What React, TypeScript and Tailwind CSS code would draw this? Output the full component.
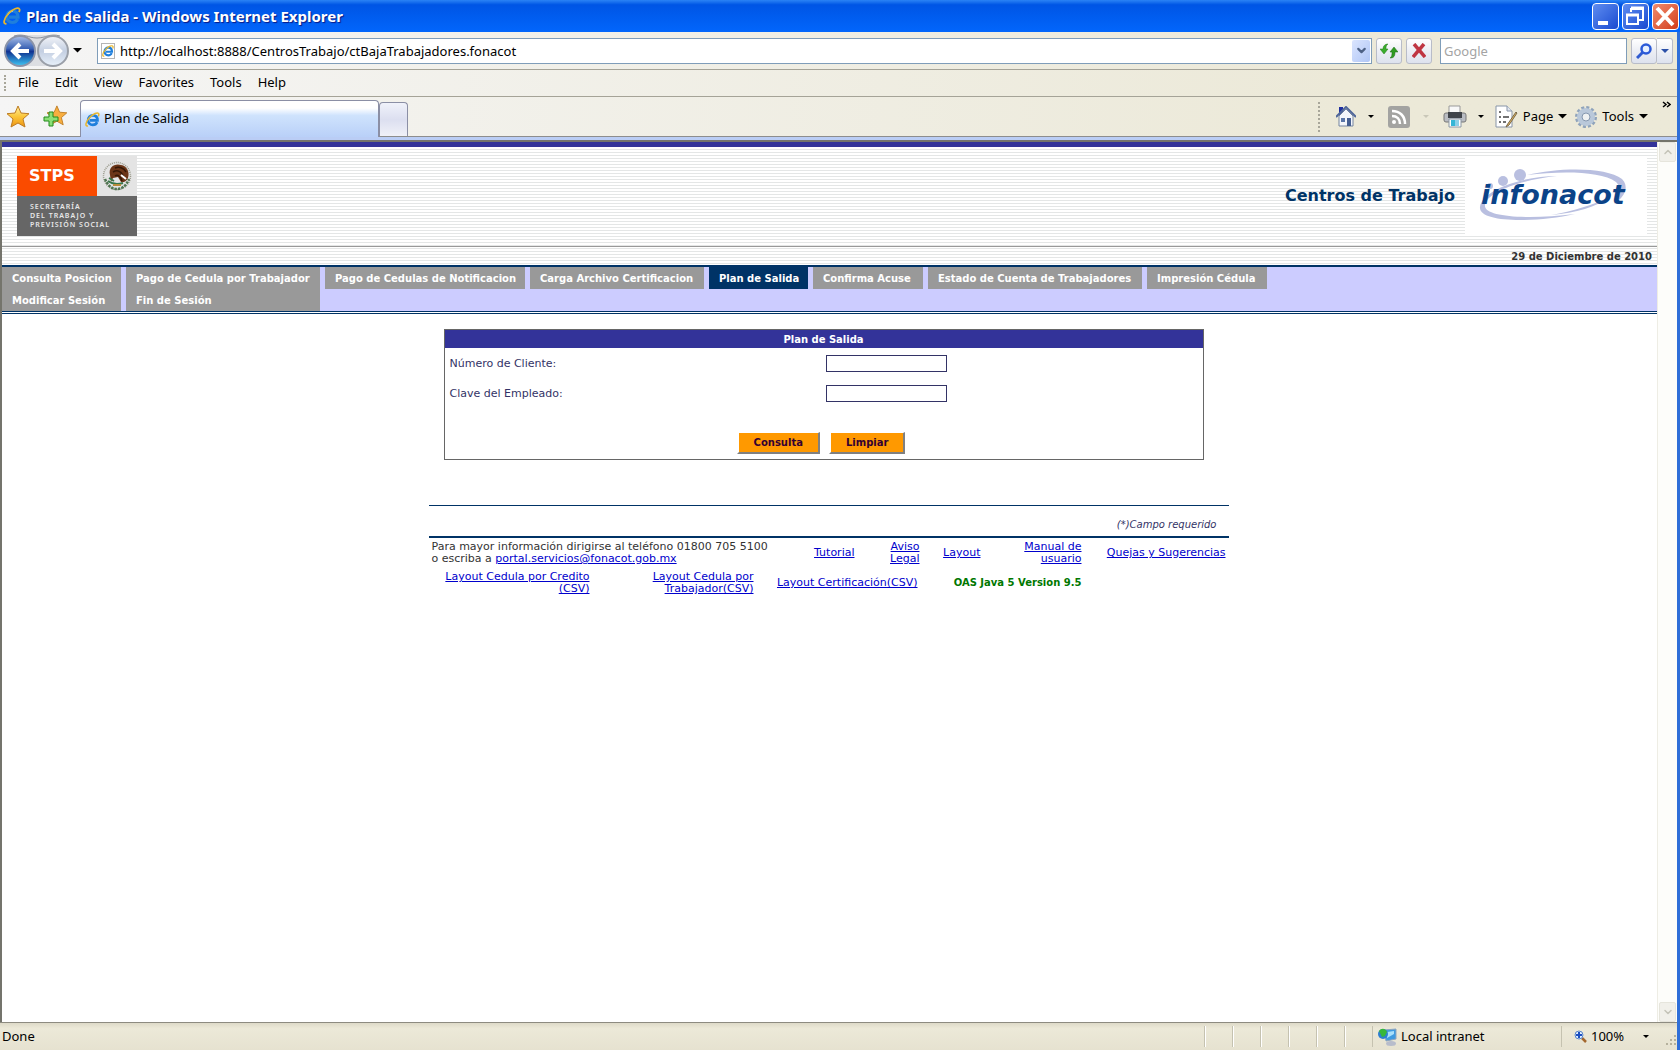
import { ChevronDown, ChevronUp } from 'lucide-react';
import type { ReactNode } from 'react';

const menuItems = ['File', 'Edit', 'View', 'Favorites', 'Tools', 'Help'];

const navColumns = [
  { width: 'w-[119px]', items: ['Consulta Posicion', 'Modificar Sesión'] },
  { width: 'w-[194px]', items: ['Pago de Cedula por Trabajador', 'Fin de Sesión'] },
  { width: 'w-[200px]', items: ['Pago de Cedulas de Notificacion'] },
  { width: 'w-[174px]', items: ['Carga Archivo Certificacion'] },
  { width: 'w-[99px]', items: ['Plan de Salida'], active: true },
  { width: 'w-[110px]', items: ['Confirma Acuse'] },
  { width: 'w-[214px]', items: ['Estado de Cuenta de Trabajadores'] },
  { width: 'w-[120px]', items: ['Impresión Cédula'] },
];

const fields = [
  { id: 'numeroCliente', label: 'Número de Cliente:' },
  { id: 'claveEmpleado', label: 'Clave del Empleado:' },
];

function IeIcon({ size }: { size: number }) {
  return (
    <svg width={size} height={size} viewBox="0 0 18 18" fill="none" className="shrink-0">
      <path
        d="M14.6 12.2c-.9 2-2.800 3.300-5.200 3.300-3.300 0-5.600-2.400-5.600-5.700 0-3.400 2.400-5.800 5.700-5.800 3.400 0 5.500 2.400 5.500 6.100H6"
        stroke="#1f7fdc"
        strokeWidth="3.200"
      />
      <path d="M5 7.500C6 5 8 4 10 4.200" stroke="#9bd6ff" strokeWidth="1.200" />
      <path d="M3.500 16.500C-.5 18 .8 11.500 5.500 6.500 9.500 2.200 15.500-.5 16.500 2.200c.3.900 0 2-.5 3" stroke="#e8b62c" strokeWidth="1.800" />
    </svg>
  );
}

function Caret({ size = 8, color = '#000' }: { size?: number; color?: string }) {
  return (
    <svg width={size} height={size / 2} viewBox="0 0 8 4" className="shrink-0">
      <path d="M0 0h8L4 4z" fill={color} />
    </svg>
  );
}

function HistoryButtons() {
  return (
    <svg width="66" height="34" viewBox="0 0 66 34">
      <defs>
        <linearGradient id="back" x1="0" y1="0" x2="0" y2="1">
          <stop offset="0" stopColor="#a9bfe8" />
          <stop offset=".42" stopColor="#3a62b4" />
          <stop offset=".52" stopColor="#0f3190" />
          <stop offset="1" stopColor="#3fc8f6" />
        </linearGradient>
        <linearGradient id="forward" x1="0" y1="0" x2="0" y2="1">
          <stop offset="0" stopColor="#f2f4f8" />
          <stop offset=".5" stopColor="#c4cfe2" />
          <stop offset="1" stopColor="#e8f1fa" />
        </linearGradient>
      </defs>
      <path d="M16 1h34v31H16z" fill="#dcdee2" />
      <path d="M10 2C20-1 24 4 33 4S46-1 56 2" stroke="#8c929c" fill="none" />
      <circle cx="16" cy="17" r="15" fill="url(#back)" stroke="#8a93a8" strokeWidth="2" />
      <circle cx="49" cy="17" r="15" fill="url(#forward)" stroke="#9a9fa8" strokeWidth="2" />
      <path d="M25 17H9M16 10l-7 7 7 7" stroke="#fff" strokeWidth="4" fill="none" />
      <path d="M40 17h16M49 10l7 7-7 7" stroke="#fff" strokeWidth="4" fill="none" />
    </svg>
  );
}

const starPath = 'M11 1l3 7 8 .7-6 5.300 2 8L11 18l-7 4 2-8L0 8.700 8 8z';

function StarIcon() {
  return (
    <svg width="22" height="23" viewBox="0 0 22 23">
      <defs>
        <linearGradient id="star" x1="0" y1="0" x2="0" y2="1">
          <stop offset="0" stopColor="#fff0a0" />
          <stop offset=".5" stopColor="#fbc63a" />
          <stop offset="1" stopColor="#ee9413" />
        </linearGradient>
      </defs>
      <path d={starPath} fill="url(#star)" stroke="#bd7c23" strokeLinejoin="round" />
    </svg>
  );
}

function AddStarIcon() {
  return (
    <svg width="24" height="23" viewBox="0 0 24 23">
      <path d={starPath} transform="translate(4 0) scale(.9)" fill="#f8ae3f" stroke="#bd7c23" strokeLinejoin="round" />
      <path d="M6 7h4v5h5v4h-5v5H6v-5H1v-4h5z" fill="#8be077" stroke="#238a1c" />
    </svg>
  );
}

function RefreshIcon() {
  return (
    <svg width="18" height="16" viewBox="0 0 18 16">
      <path d="M8 1C5 1 3 3 3 6H0l4 5 4-5H6c0-2 0-4 2-5z" fill="#3bad2c" stroke="#237d1b" strokeWidth=".5" />
      <path d="M10 15c4 0 5-2 5-6h3l-4-5-4 5h2c0 2 0 5-2 6z" fill="#2f9b22" stroke="#1c6d15" strokeWidth=".5" />
    </svg>
  );
}

function HomeIcon() {
  return (
    <svg width="20" height="21" viewBox="0 0 20 21">
      <path d="M3 1h4v8H3z" fill="#1f2fa0" />
      <path d="M3 10l7-7 7 7v10H3z" fill="#f4f6fb" stroke="#7585a0" />
      <path d="M0 11L10 1l10 10" fill="none" stroke="#50679a" strokeWidth="2" />
      <path d="M5 12h4v4H5z" fill="#5b76a8" />
      <path d="M11 12h4v8h-4z" fill="#465f92" />
    </svg>
  );
}

function FeedIcon() {
  return (
    <svg width="22" height="22" viewBox="0 0 22 22" fill="none">
      <rect width="22" height="22" rx="3" fill="#a3a3a1" />
      <circle cx="6" cy="16" r="2" fill="#fff" />
      <path d="M4 10c5 0 8 3 8 8M4 5c8 0 13 5 13 13" stroke="#fff" strokeWidth="2.500" />
    </svg>
  );
}

function PrinterIcon() {
  return (
    <svg width="24" height="23" viewBox="0 0 24 23">
      <path d="M6 1h11v9H6z" fill="#f8f8f8" stroke="#999" />
      <rect x="1" y="8" width="22" height="9" rx="2" fill="#b9bcc2" stroke="#777" />
      <path d="M5 7h14v6H5z" fill="#40444a" />
      <path d="M6 14h12v8H6z" fill="#fff" stroke="#8a97a5" />
      <path d="M8 15h4v6H8z" fill="#35b6d6" />
      <path d="M12 15h4v6h-4z" fill="#8bd0e8" />
    </svg>
  );
}

function PageIcon() {
  return (
    <svg width="23" height="23" viewBox="0 0 23 23">
      <path d="M1 1h11l5 5v16H1z" fill="#fff" stroke="#8895a8" />
      <path d="M12 1v5h5" fill="#e2e7ef" stroke="#8895a8" />
      <path d="M4 7h2M4 12h2M4 17h2M8 12h6M8 17h3" stroke="#444" strokeWidth="1.500" />
      <path d="M21 7L12 20l-1 2 3-2 8-12z" fill="#e7b65b" stroke="#76684c" />
    </svg>
  );
}

function GearIcon() {
  return (
    <svg width="22" height="22" viewBox="0 0 22 22" fill="none">
      <circle cx="11" cy="11" r="9.500" stroke="#8fa3bb" strokeWidth="3" strokeDasharray="3 1.970" />
      <circle cx="11" cy="11" r="6.500" stroke="#b9c8da" strokeWidth="5" />
      <circle cx="11" cy="11" r="4" fill="#eef1f2" stroke="#8497b0" />
    </svg>
  );
}

function IntranetIcon() {
  return (
    <svg width="19" height="18" viewBox="0 0 19 18">
      <ellipse cx="13" cy="15.500" rx="5" ry="2.500" fill="#b7bccb" />
      <path d="M6 2l12-1v10l-10 2z" fill="#3f9be0" stroke="#8fa5be" />
      <path d="M9 4l7-1v3l-7 4z" fill="#a8e0fb" />
      <circle cx="5" cy="6" r="5" fill="#2d7fd0" />
      <path d="M1 3c3-4 7-2 8 1L7 8 4 9z" fill="#37b83a" />
    </svg>
  );
}

function MagnifierIcon() {
  return (
    <svg width="16" height="16" viewBox="0 0 16 16" fill="none">
      <path d="M7 9l-6 6" stroke="#2f5bd0" strokeWidth="3" />
      <circle cx="10" cy="6" r="4.500" fill="#e6f0ff" stroke="#2b5ad8" strokeWidth="2.500" />
    </svg>
  );
}

function ZoomIcon() {
  return (
    <svg width="13" height="13" viewBox="0 0 13 13" fill="none">
      <path d="M8 8l4 4" stroke="#a4672e" strokeWidth="2.500" />
      <circle cx="5" cy="5" r="4" fill="#dcecff" stroke="#5b86c8" />
      <path d="M5 2v6M2 5h6" stroke="#1c4fc0" strokeWidth="2" />
    </svg>
  );
}

function StpsLogo() {
  return (
    <div className="w-[120px] shrink-0">
      <div className="flex h-10">
        <div className="flex w-20 items-center bg-[#fa4b00] pl-3 text-[16px] font-bold text-white">STPS</div>
        <div className="grid w-10 place-items-center bg-[#e4e4e4]">
          <svg width="30" height="32" viewBox="0 0 30 32" fill="none">
            <circle cx="15" cy="16" r="13.500" stroke="#9a9a8c" strokeWidth="1.500" strokeDasharray="1 1" />
            <path d="M3 19c3 7 7 10 12 10s9-3 12-10" stroke="#4e7450" strokeWidth="2.500" strokeDasharray="2.500 1" />
            <path d="M8 15C6 7 13 3 19 5c6 1 9 7 7 13-2 4-5 5-7 4l-3-5-5 1-2 4z" fill="#6b3517" />
            <path d="M13 8c4-2 9 0 11 4M11 12c5-3 9 0 11 6M13 16c3-2 6 1 7 5" stroke="#351705" strokeWidth="1.500" />
            <path d="M19 15l5 4" stroke="#fff" strokeWidth="2" />
            <path d="M6 21c4 3 9 4 15 2M7 18l5 3" stroke="#39754a" strokeWidth="2" />
            <path d="M11 25h8" stroke="#b88b3a" strokeWidth="2" />
          </svg>
        </div>
      </div>
      <div className="flex h-10 flex-col justify-center bg-[#666] pl-[13px] font-['Noto_Sans'] text-[7px] leading-[9px] font-semibold tracking-[1px] whitespace-nowrap text-[#e8e8e8]">
        <span>SECRETARÍA</span>
        <span>DEL TRABAJO Y</span>
        <span>PREVISIÓN SOCIAL</span>
      </div>
    </div>
  );
}

function InfonacotLogo() {
  return (
    <svg width="182" height="80" viewBox="0 0 182 80" className="shrink-0 bg-white">
      <path d="M62 19C95 11 142 11 157 23c7 7 4 17-8 25 7-9 8-16 2-22C136 15 96 15 62 19z" fill="#b9bfe0" />
      <path d="M92 20C55 24 22 36 20 49c-2 12 42 15 90 9-40 9-97 9-95-7 2-17 43-31 77-31z" fill="#b9bfe0" />
      <path d="M86 59c22-4 42-10 58-18-12 10-33 16-58 18z" fill="#b9bfe0" />
      <circle cx="25" cy="30" r="3" fill="#b9bfe0" />
      <circle cx="38" cy="25" r="5" fill="#b9bfe0" />
      <circle cx="55" cy="19" r="6" fill="#b9bfe0" />
      <text x="16" y="48" fontSize="27" fontWeight="bold" fontStyle="italic" fontFamily="'DejaVu Sans', sans-serif" fill="#0b4388">
        infonacot
      </text>
    </svg>
  );
}

function ToolButton({ label, children }: { label: string; children: ReactNode }) {
  return (
    <button
      type="button"
      aria-label={label}
      className="grid h-[26px] w-[26px] place-items-center rounded-[3px] border border-[#b8bcc8] bg-linear-to-b from-white via-[#eceef4] to-[#dde2ee]"
    >
      {children}
    </button>
  );
}

function TitleBar() {
  return (
    <header className="flex h-8 items-center bg-linear-to-b from-[#2b83f5] via-[#0055e5] via-15% to-[#0266fc] pr-px pl-[3px]">
      <IeIcon size={18} />
      <h1 className="ml-[5px] font-['Noto_Sans'] text-[15px] font-bold text-white [text-shadow:1px_1px_1px_#0a1883]">
        Plan de Salida - Windows Internet Explorer
      </h1>
      <div className="ml-auto flex gap-[3px]">
        <button type="button" aria-label="Minimize" className="rounded-[4px] border border-white bg-linear-to-br from-[#5f8cf0] to-[#1a48d0]">
          <svg width="25" height="25" viewBox="0 0 25 25">
            <path d="M5 17h10v4H5z" fill="#fff" />
          </svg>
        </button>
        <button type="button" aria-label="Restore" className="rounded-[4px] border border-white bg-linear-to-br from-[#5f8cf0] to-[#1a48d0]">
          <svg width="25" height="25" viewBox="0 0 25 25" fill="none" stroke="#fff">
            <path d="M8 8V5h12v11h-4" strokeWidth="2" />
            <path d="M8 4h13" strokeWidth="3" />
            <path d="M4 11h11v9H4z" strokeWidth="2" />
            <path d="M3 11h13" strokeWidth="3" />
          </svg>
        </button>
        <button type="button" aria-label="Close" className="rounded-[4px] border border-white bg-linear-to-br from-[#f08a6c] to-[#d23a14]">
          <svg width="25" height="25" viewBox="0 0 25 25">
            <path d="M4 4l16 17M20 4L4 21" stroke="#fff" strokeWidth="4" />
          </svg>
        </button>
      </div>
    </header>
  );
}

function AddressBar() {
  return (
    <div className="flex h-[38px] items-center border-b border-[#a5a397] pr-1 pl-1">
      <button type="button" aria-label="Back and forward">
        <HistoryButtons />
      </button>
      <button type="button" aria-label="Recent pages" className="ml-[3px]">
        <Caret size={9} />
      </button>
      <div className="ml-[15px] flex h-[26px] flex-1 items-center border border-[#7f9db9] bg-white pr-px pl-[3px]">
        <span className="grid h-4 w-[14px] place-items-center border border-[#b5b5b5] bg-white">
          <IeIcon size={12} />
        </span>
        <input
          type="text"
          aria-label="Address"
          defaultValue="http://localhost:8888/CentrosTrabajo/ctBajaTrabajadores.fonacot"
          className="ml-[5px] h-5 flex-1 bg-transparent text-black outline-none"
        />
        <button type="button" aria-label="Show address list" className="grid h-[22px] w-[18px] place-items-center rounded-[2px] bg-linear-to-br from-[#dbe5fe] to-[#b0c6f6]">
          <ChevronDown size={13} strokeWidth={4} color="#4d6185" />
        </button>
      </div>
      <div className="ml-1 flex gap-1">
        <ToolButton label="Refresh">
          <RefreshIcon />
        </ToolButton>
        <ToolButton label="Stop">
          <svg width="14" height="15" viewBox="0 0 14 15">
            <path d="M2 1l11 13M12 1L1 14" stroke="#bf3542" strokeWidth="3.500" />
          </svg>
        </ToolButton>
      </div>
      <input
        type="text"
        aria-label="Search"
        placeholder="Google"
        className="ml-2 h-[26px] w-[187px] border border-[#7f9db9] bg-white px-[3px] text-black outline-none placeholder:text-[#a4a4a4]"
      />
      <div className="ml-1 flex">
        <ToolButton label="Search the web">
          <MagnifierIcon />
        </ToolButton>
        <button
          type="button"
          aria-label="Search options"
          className="grid h-[26px] w-4 place-items-center rounded-r-[3px] border border-l-0 border-[#b8bcc8] bg-linear-to-b from-white to-[#dde2ee]"
        >
          <Caret color="#2b50a8" />
        </button>
      </div>
    </div>
  );
}

function CommandBar() {
  return (
    <div className="flex h-[40px] items-stretch border-b border-[#8d8d8d]">
      <div className="flex items-center gap-[14px] pl-[7px]">
        <button type="button" aria-label="Favorites Center">
          <StarIcon />
        </button>
        <button type="button" aria-label="Add to Favorites">
          <AddStarIcon />
        </button>
      </div>
      <button
        type="button"
        className="-mb-px ml-[13px] mt-[3px] flex w-[299px] items-center gap-1 rounded-t-[4px] border border-b-0 border-[#8b8fa5] bg-linear-to-b from-white from-20% via-[#cfe3fd] via-40% to-[#b9d0f8] pl-1"
      >
        <IeIcon size={15} />
        Plan de Salida
      </button>
      <button
        type="button"
        aria-label="New tab"
        className="mt-[5px] w-[29px] rounded-t-[4px] border border-b-0 border-[#8b8fa5] bg-linear-to-b from-[#f0f2fa] via-[#dcdff0] to-[#f0f1f8]"
      />
      <div className="ml-auto flex items-center pr-[6px]">
        <span className="h-[30px] border-l-2 border-dotted border-[#a8a69a]" />
        <div className="ml-4 flex items-center gap-3">
          <button type="button" aria-label="Home">
            <HomeIcon />
          </button>
          <Caret size={6} />
        </div>
        <div className="ml-[14px] flex items-center gap-[13px]">
          <button type="button" aria-label="Feeds">
            <FeedIcon />
          </button>
          <Caret size={6} color="#c9c7b8" />
        </div>
        <div className="ml-[14px] flex items-center gap-[11px]">
          <button type="button" aria-label="Print">
            <PrinterIcon />
          </button>
          <Caret size={6} />
        </div>
        <button type="button" className="ml-[11px] flex items-center gap-[5px]">
          <PageIcon />
          Page
          <Caret size={9} />
        </button>
        <button type="button" className="ml-2 flex items-center gap-[5px]">
          <GearIcon />
          Tools
          <Caret size={9} />
        </button>
        <button type="button" aria-label="More commands" className="ml-[14px] self-start pt-1">
          <svg width="9" height="7" viewBox="0 0 9 7" fill="none" stroke="#000" strokeWidth="1.500">
            <path d="M1 1l3 2.500L1 6M5 1l3 2.500L5 6" />
          </svg>
        </button>
      </div>
    </div>
  );
}

function SiteHeader() {
  return (
    <>
      <div className="border-t-[5px] border-[#333399] bg-[repeating-linear-gradient(to_bottom,#fff_0px,#fff_2px,#e4e6e6_2px,#e4e6e6_3px)]">
        <div className="flex h-[100px] items-center justify-between border-b border-[#999] pr-[10px] pb-[2px] pl-[15px]">
          <StpsLogo />
          <div className="flex items-center gap-[10px]">
            <h2 className="text-[16px] font-bold text-[#003366]">Centros de Trabajo</h2>
            <InfonacotLogo />
          </div>
        </div>
        <p className="h-[18px] pr-[5px] text-right text-[10px] leading-[19px] font-bold text-[#333]">29 de Diciembre de 2010</p>
      </div>
      <nav className="flex gap-[5px] border-t-2 border-b border-[#003366] bg-[#ccccff] text-[10px] leading-[23px] font-bold whitespace-nowrap">
        {navColumns.map((column) => (
          <div key={column.items[0]} className={`${column.width} shrink-0`}>
            {column.items.map((item) => (
              <a
                key={item}
                href="#"
                className={`block h-[22px] pl-[10px] text-white ${column.active ? 'bg-[#003366]' : 'bg-[#999999]'}`}
              >
                {item}
              </a>
            ))}
          </div>
        ))}
      </nav>
      <div className="mt-px border-t border-[#003366]" />
    </>
  );
}

function ExitPlanForm() {
  return (
    <form className="mr-[25px] ml-[15px] border border-[#666]" onSubmit={(e) => e.preventDefault()}>
      <h3 className="h-[18px] bg-[#333399] text-center text-[10px] leading-[19px] font-bold text-white">Plan de Salida</h3>
      <div className="grid gap-[13px] pt-[6px] pl-[5px]">
        {fields.map((field) => (
          <div key={field.id} className="grid h-[17px] grid-cols-2 items-center">
            <label htmlFor={field.id} className="text-[11px] leading-[19px] text-[#333366]">
              {field.label}
            </label>
            <input id={field.id} type="text" className="h-[17px] w-[121px] border border-[#333366] bg-white px-1 text-[11px] outline-none" />
          </div>
        ))}
      </div>
      <div className="flex justify-center gap-[9px] pt-[31px] pr-[5px] pb-[5px]">
        {['Consulta', 'Limpiar'].map((label) => (
          <button
            key={label}
            type={label === 'Consulta' ? 'submit' : 'reset'}
            className="h-[22px] border border-t-white border-r-2 border-b-2 border-l-2 border-l-white border-r-[#808080] border-b-[#808080] bg-[#ff9900] px-[15px] text-[10px] font-bold text-[#330033]"
          >
            {label}
          </button>
        ))}
      </div>
    </form>
  );
}

function FooterLink({ children }: { children: ReactNode }) {
  return (
    <a href="#" className="text-right text-[#0000cc] underline">
      {children}
    </a>
  );
}

function SiteFooter() {
  return (
    <footer className="mt-[45px] border-t border-[#003366] text-[11px] leading-[12px] text-[#333]">
      <p className="h-[30px] pt-[13px] pr-3 text-right text-[10px] leading-[12px] text-[#333366] italic">(*)Campo requerido</p>
      <div className="grid grid-cols-[351px_75px_65px_61px_101px_144px] items-center border-t-2 border-[#003366] pt-[3px] whitespace-nowrap">
        <p className="pl-[3px]">
          Para mayor información dirigirse al teléfono 01800 705 5100
          <br />o escriba a{' '}
          <a href="mailto:portal.servicios@fonacot.gob.mx" className="text-[#0000cc] underline">
            portal.servicios@fonacot.gob.mx
          </a>
        </p>
        <FooterLink>Tutorial</FooterLink>
        <FooterLink>
          Aviso
          <br />
          Legal
        </FooterLink>
        <FooterLink>Layout</FooterLink>
        <FooterLink>
          Manual de
          <br />
          usuario
        </FooterLink>
        <FooterLink>Quejas y Sugerencias</FooterLink>
      </div>
      <div className="mt-[6px] grid grid-cols-[161px_164px_164px_164px] items-center whitespace-nowrap">
        <FooterLink>
          Layout Cedula por Credito
          <br />
          (CSV)
        </FooterLink>
        <FooterLink>
          Layout Cedula por
          <br />
          Trabajador(CSV)
        </FooterLink>
        <FooterLink>Layout Certificación(CSV)</FooterLink>
        <strong className="text-right text-[10px] text-[#007700]">OAS Java 5 Version 9.5</strong>
      </div>
    </footer>
  );
}

function ScrollBar() {
  const arrow = 'grid h-[20px] w-[17px] place-items-center rounded-[2px] border border-[#e6e5dc] bg-[#f1f0ea] text-[#c4c3b8]';
  return (
    <div className="flex w-5 shrink-0 flex-col items-center justify-between border-l border-[#eeede5] bg-[#fdfdfa]">
      <button type="button" aria-label="Scroll up" className={arrow}>
        <ChevronUp size={12} strokeWidth={3} />
      </button>
      <button type="button" aria-label="Scroll down" className={arrow}>
        <ChevronDown size={12} strokeWidth={3} />
      </button>
    </div>
  );
}

function StatusBar() {
  return (
    <footer className="flex h-7 items-stretch border-t border-[#8d8b80] bg-linear-to-b from-[#dedac8] via-[#ece9d8] via-20% to-[#e6e2d0] text-black">
      <span className="flex flex-1 items-center pl-[2px]">Done</span>
      {[1, 2, 3, 4, 5, 6].map((pane) => (
        <span key={pane} className="my-[3px] w-7 border-l border-[#c5c2b0] shadow-[inset_1px_0_#fff]" />
      ))}
      <span className="my-[3px] flex w-[189px] items-center gap-1 border-l border-[#c5c2b0] pl-[5px]">
        <IntranetIcon />
        Local intranet
      </span>
      <button type="button" className="my-[3px] flex w-[116px] items-center border-l border-[#c5c2b0] pl-3">
        <ZoomIcon />
        <span className="mr-auto ml-1">100%</span>
        <Caret size={6} />
        <svg width="12" height="20" viewBox="0 0 12 20" fill="#b5b19c" className="ml-4">
          <path d="M9 8h2v2H9zM5 12h2v2H5zM9 12h2v2H9zM1 16h2v2H1zM5 16h2v2H5zM9 16h2v2H9z" />
        </svg>
      </button>
    </footer>
  );
}

export default function App() {
  return (
    <div className="flex min-h-screen flex-col bg-[#ece9d8] font-['Noto_Sans',sans-serif] text-[13px] text-black">
      <TitleBar />
      <div className="flex flex-1 flex-col border-r-[3px] border-[#2f6fd8]">
        <div className="bg-linear-to-r from-[#f5f5f5] to-[#ece9d8] to-80%">
          <AddressBar />
          <nav className="flex h-[27px] items-center gap-4 border-b border-[#a5a397] pl-1">
            <span className="-mr-1 h-4 border-l-2 border-dotted border-[#a8a69a]" />
            {menuItems.map((item) => (
              <button key={item} type="button">
                {item}
              </button>
            ))}
          </nav>
          <CommandBar />
        </div>
        <div className="h-[3px] bg-[#bacdf5]" />
        <div className="flex flex-1 border-t-2 border-l-2 border-[#74746c]">
          <main className="min-w-0 flex-1 bg-white font-['DejaVu_Sans',sans-serif]">
            <SiteHeader />
            <div className="pt-[15px] pr-[2px]">
              <div className="mx-auto w-[800px]">
                <ExitPlanForm />
                <SiteFooter />
              </div>
            </div>
          </main>
          <ScrollBar />
        </div>
        <StatusBar />
      </div>
    </div>
  );
}
